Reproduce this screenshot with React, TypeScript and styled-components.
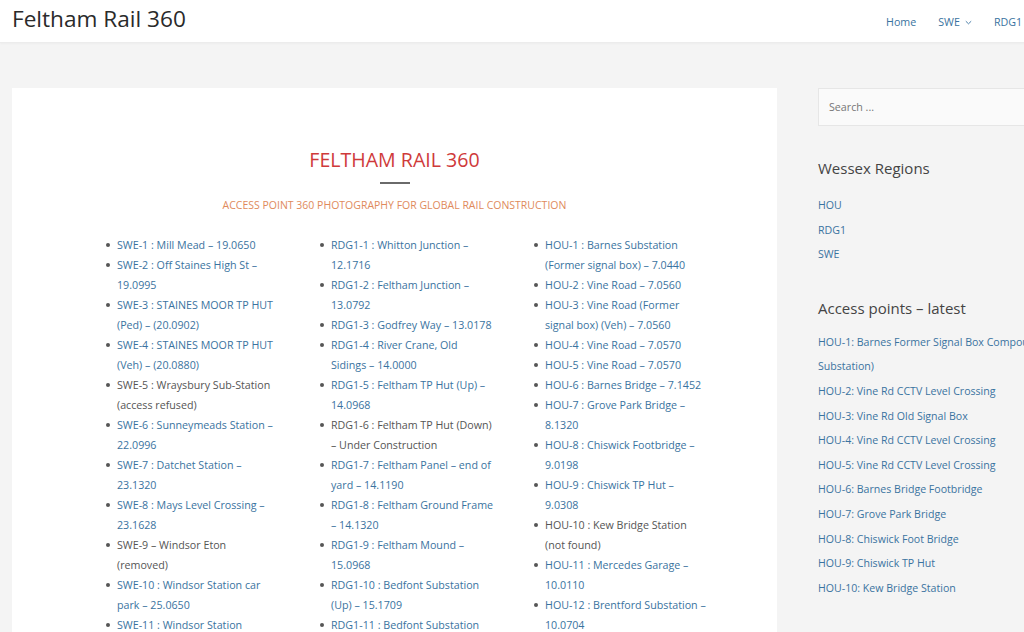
import React from "react";
import styled, { createGlobalStyle } from "styled-components";

const Global = createGlobalStyle`
  html, body { margin: 0; padding: 0; }
  body {
    background: #f4f4f4;
    font-family: "Open Sans", "Liberation Sans", sans-serif;
    overflow: hidden;
    width: 1024px;
    height: 632px;
  }
  * { box-sizing: border-box; }
`;

const Page = styled.div`
  width: 1140px;
`;

const Header = styled.header`
  height: 43px;
  background: #fff;
  border-bottom: 1px solid #ececec;
  box-shadow: 0 1px 2px rgba(0, 0, 0, 0.03);
  display: grid;
  grid-template-columns: 863px auto;
  align-items: center;
  padding-left: 12px;
`;

const SiteTitle = styled.div`
  font-size: 22.6px;
  color: #2a2a2a;
  line-height: 1;
  margin-top: -4px;
`;

const Nav = styled.nav`
  display: flex;
  align-items: center;
  margin-top: 2px;
`;

const NavItem = styled.a`
  font-size: 10.7px;
  color: #3a73a0;
  padding: 0 11px;
  display: flex;
  align-items: center;
  gap: 5px;
  text-decoration: none;
  white-space: nowrap;
`;

const Main = styled.div`
  display: flex;
  align-items: flex-start;
  padding: 45px 0 0 12px;
  gap: 41px;
`;

const Card = styled.article`
  width: 765px;
  height: 600px;
  background: #fff;
  padding-top: 58px;
`;

const Title = styled.h1`
  margin: 0;
  text-align: center;
  font-weight: 400;
  font-size: 19.6px;
  line-height: 28px;
  color: #cf3a3a;
`;

const Divider = styled.div`
  width: 30px;
  height: 2px;
  background: #6a6a6a;
  margin: 8px auto 0;
`;

const Subtitle = styled.p`
  margin: 14px 0 0;
  text-align: center;
  font-size: 10.5px;
  color: #e08a5c;
  text-transform: uppercase;
`;

const Columns = styled.div`
  display: grid;
  grid-template-columns: repeat(3, 190px);
  column-gap: 24px;
  margin: 23px 0 0 79px;
`;

const List = styled.ul<{ $pr: number }>`
  margin: 0;
  padding: 0 ${(p) => p.$pr}px 0 26px;
  list-style: none;
`;

const Item = styled.li<{ $plain?: boolean }>`
  position: relative;
  font-size: 10.7px;
  line-height: 20px;
  color: ${(p) => (p.$plain ? "#555" : "#3a73a0")};
  &::before {
    content: "";
    position: absolute;
    left: -11px;
    top: 8px;
    width: 4px;
    height: 4px;
    border-radius: 50%;
    background: #555;
  }
`;

const Sidebar = styled.aside`
  width: 300px;
`;

const Search = styled.div`
  height: 38px;
  background: #fafafa;
  border: 1px solid #e6e6e6;
  display: flex;
  align-items: center;
  padding-left: 10px;
  font-size: 10.7px;
  color: #767676;
`;

const WidgetTitle = styled.h2<{ $top: number }>`
  margin: ${(p) => p.$top}px 0 0;
  font-weight: 400;
  font-size: 15px;
  line-height: 24px;
  color: #444;
`;

const WidgetList = styled.ul<{ $top: number }>`
  list-style: none;
  margin: ${(p) => p.$top}px 0 0;
  padding: 0;
`;

const WidgetItem = styled.li`
  font-size: 10.6px;
  line-height: 24.6px;
  color: #3a73a0;
`;

const Chevron = () => (
  <svg width="7" height="5" viewBox="0 0 7 5" fill="none">
    <path d="M0.8 1.2 L3.5 3.8 L6.2 1.2" stroke="#3a73a0" strokeWidth="0.9" />
  </svg>
);

type Entry = [string, boolean?];

const col1: Entry[] = [
  ["SWE-1 : Mill Mead – 19.0650"],
  ["SWE-2 : Off Staines High St – 19.0995"],
  ["SWE-3 : STAINES MOOR TP HUT (Ped) – (20.0902)"],
  ["SWE-4 : STAINES MOOR TP HUT (Veh) – (20.0880)"],
  ["SWE-5 : Wraysbury Sub-Station (access refused)", true],
  ["SWE-6 : Sunneymeads Station – 22.0996"],
  ["SWE-7 : Datchet Station – 23.1320"],
  ["SWE-8 : Mays Level Crossing – 23.1628"],
  ["SWE-9 – Windsor Eton (removed)", true],
  ["SWE-10 : Windsor Station car park – 25.0650"],
  ["SWE-11 : Windsor Station Approach – 25.1100"],
];

const col2: Entry[] = [
  ["RDG1-1 : Whitton Junction – 12.1716"],
  ["RDG1-2 : Feltham Junction – 13.0792"],
  ["RDG1-3 : Godfrey Way – 13.0178"],
  ["RDG1-4 : River Crane, Old Sidings – 14.0000"],
  ["RDG1-5 : Feltham TP Hut (Up) – 14.0968"],
  ["RDG1-6 : Feltham TP Hut (Down) – Under Construction", true],
  ["RDG1-7 : Feltham Panel – end of yard – 14.1190"],
  ["RDG1-8 : Feltham Ground Frame – 14.1320"],
  ["RDG1-9 : Feltham Mound – 15.0968"],
  ["RDG1-10 : Bedfont Substation (Up) – 15.1709"],
  ["RDG1-11 : Bedfont Substation (Down) – 15.1709"],
];

const col3: Entry[] = [
  ["HOU-1 : Barnes Substation (Former signal box) – 7.0440"],
  ["HOU-2 : Vine Road – 7.0560"],
  ["HOU-3 : Vine Road (Former signal box) (Veh) – 7.0560"],
  ["HOU-4 : Vine Road – 7.0570"],
  ["HOU-5 : Vine Road – 7.0570"],
  ["HOU-6 : Barnes Bridge – 7.1452"],
  ["HOU-7 : Grove Park Bridge – 8.1320"],
  ["HOU-8 : Chiswick Footbridge – 9.0198"],
  ["HOU-9 : Chiswick TP Hut – 9.0308"],
  ["HOU-10 : Kew Bridge Station (not found)", true],
  ["HOU-11 : Mercedes Garage – 10.0110"],
  ["HOU-12 : Brentford Substation – 10.0704"],
];

const latest = [
  "HOU-1: Barnes Former Signal Box Compound (Barnes Substation)",
  "HOU-2: Vine Rd CCTV Level Crossing",
  "HOU-3: Vine Rd Old Signal Box",
  "HOU-4: Vine Rd CCTV Level Crossing",
  "HOU-5: Vine Rd CCTV Level Crossing",
  "HOU-6: Barnes Bridge Footbridge",
  "HOU-7: Grove Park Bridge",
  "HOU-8: Chiswick Foot Bridge",
  "HOU-9: Chiswick TP Hut",
  "HOU-10: Kew Bridge Station",
];

const Col = ({ items, pr = 0 }: { items: Entry[]; pr?: number }) => (
  <List $pr={pr}>
    {items.map(([t, plain]) => (
      <Item key={t} $plain={plain}>
        {t}
      </Item>
    ))}
  </List>
);

export default function App() {
  return (
    <Page>
      <Global />
      <Header>
        <SiteTitle>Feltham Rail 360</SiteTitle>
        <Nav>
          <NavItem>Home</NavItem>
          <NavItem>
            SWE <Chevron />
          </NavItem>
          <NavItem>RDG1</NavItem>
          <NavItem>
            HOU <Chevron />
          </NavItem>
        </Nav>
      </Header>
      <Main>
        <Card>
          <Title>FELTHAM RAIL 360</Title>
          <Divider />
          <Subtitle>Access Point 360 Photography for Global Rail Construction</Subtitle>
          <Columns>
            <Col items={col1} pr={4} />
            <Col items={col2} />
            <Col items={col3} />
          </Columns>
        </Card>
        <Sidebar>
          <Search>Search ...</Search>
          <WidgetTitle $top={30}>Wessex Regions</WidgetTitle>
          <WidgetList $top={13}>
            <WidgetItem>HOU</WidgetItem>
            <WidgetItem>RDG1</WidgetItem>
            <WidgetItem>SWE</WidgetItem>
          </WidgetList>
          <WidgetTitle $top={29}>Access points – latest</WidgetTitle>
          <WidgetList $top={10}>
            {latest.map((t) => (
              <WidgetItem key={t}>{t}</WidgetItem>
            ))}
          </WidgetList>
        </Sidebar>
      </Main>
    </Page>
  );
}
